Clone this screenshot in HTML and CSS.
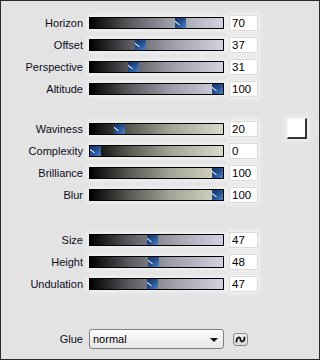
FILE: index.html
```html
<!DOCTYPE html>
<html>
<head>
<meta charset="utf-8">
<link rel="stylesheet" href="styles.css">
</head>
<body>
<div class="panel">
  <div class="group g1">
    <div class="row"><span class="lbl">Horizon</span><div class="slider cool"><span class="thumb" style="left:85px"></span></div><div class="num">70</div></div>
    <div class="row"><span class="lbl">Offset</span><div class="slider cool"><span class="thumb" style="left:45px"></span></div><div class="num">37</div></div>
    <div class="row"><span class="lbl">Perspective</span><div class="slider cool"><span class="thumb" style="left:38px"></span></div><div class="num">31</div></div>
    <div class="row"><span class="lbl">Altitude</span><div class="slider cool"><span class="thumb" style="left:122px"></span></div><div class="num">100</div></div>
  </div>
  <div class="group g2">
    <div class="row"><span class="lbl">Waviness</span><div class="slider warm"><span class="thumb" style="left:24px"></span></div><div class="num">20</div><div class="swatch"></div></div>
    <div class="row"><span class="lbl">Complexity</span><div class="slider warm"><span class="thumb" style="left:0px"></span></div><div class="num">0</div></div>
    <div class="row"><span class="lbl">Brilliance</span><div class="slider warm"><span class="thumb" style="left:122px"></span></div><div class="num">100</div></div>
    <div class="row"><span class="lbl">Blur</span><div class="slider warm"><span class="thumb" style="left:122px"></span></div><div class="num">100</div></div>
  </div>
  <div class="group g3">
    <div class="row"><span class="lbl">Size</span><div class="slider cool"><span class="thumb" style="left:57px"></span></div><div class="num">47</div></div>
    <div class="row"><span class="lbl">Height</span><div class="slider cool"><span class="thumb" style="left:58px"></span></div><div class="num">48</div></div>
    <div class="row"><span class="lbl">Undulation</span><div class="slider cool"><span class="thumb" style="left:57px"></span></div><div class="num">47</div></div>
  </div>
  <div class="row glue">
    <span class="lbl">Glue</span>
    <div class="select"><span>normal</span><span class="arrow"></span></div>
    <div class="sbtn"><svg width="11" height="9" viewBox="0 0 11 9"><path d="M1.5 6.5 C1.5 1.5 5.5 1.5 5.5 4.5 S9.5 7.5 9.5 2.5" fill="none" stroke="#111" stroke-width="1.8" stroke-linecap="round"/></svg></div>
  </div>
</div>
</body>
</html>
```
FILE: styles.css
```css
html, body {
  margin: 0;
  padding: 0;
  background: #e3e3e3;
}
.panel {
  width: 320px;
  height: 360px;
  box-sizing: border-box;
  border: 1px solid #2a2a2a;
  background: #e3e3e3;
  font-family: "Liberation Sans", Arial, sans-serif;
  font-size: 11px;
  color: #0d0d1a;
}
.group { display: flex; flex-direction: column; }
.g1 { margin-top: 11px; }
.g2 { margin-top: 18px; }
.g3 { margin-top: 23px; }
.row {
  display: grid;
  grid-template-columns: 83px 135px 29px 1fr;
  column-gap: 5px;
  align-items: center;
  height: 22px;
}
.lbl {
  text-align: right;
  padding-right: 1px;
  white-space: nowrap;
}
.slider {
  position: relative;
  height: 12px;
  box-sizing: border-box;
  border: 1px solid #000;
  box-shadow: 0 0 4px 2px #f2f2f2;
}
.cool { background: linear-gradient(to right, #000 0%, #5a5a60 30%, #9c9ca6 60%, #d2d3e0 100%); }
.warm { background: linear-gradient(to right, #000 0%, #5a5a54 30%, #a2a296 60%, #d9dac8 100%); }
.thumb {
  position: absolute;
  top: 0;
  width: 11px;
  height: 10px;
  background:
    linear-gradient(45deg, transparent 46%, rgba(255,255,255,0) 46%),
    linear-gradient(135deg, #1a3566 0%, #24508e 50%, #4a88d2 100%);
  overflow: hidden;
}
.thumb::after {
  content: "";
  position: absolute;
  left: -1px;
  top: 2px;
  width: 7px;
  height: 1px;
  background: #f4f6ff;
  transform: rotate(38deg);
  transform-origin: left center;
}
.num {
  height: 16px;
  box-sizing: border-box;
  background: #fff;
  border: 1px solid #dadada;
  box-shadow: 0 0 4px 2px #f2f2f2;
  font-size: 11.5px;
  line-height: 14px;
  padding-left: 2px;
  color: #000;
}
.swatch {
  justify-self: start;
  margin-left: 24px;
  margin-top: -1px;
  width: 20px;
  height: 21px;
  box-sizing: border-box;
  background: #fff;
  border-top: 1px solid #f4f4f4;
  border-left: 1px solid #f4f4f4;
  border-right: 2px solid #333;
  border-bottom: 2px solid #333;
  box-shadow: 0 0 4px 2px #f0f0f0;
}
.glue {
  margin-top: 33px;
}
.select {
  height: 20px;
  box-sizing: border-box;
  border: 1px solid #7e7e7e;
  border-radius: 3px;
  background: linear-gradient(to bottom, #fdfdfd, #e6e6e6);
  display: flex;
  align-items: center;
  justify-content: space-between;
  padding: 0 5px 0 3px;
  color: #000;
}
.arrow {
  width: 0;
  height: 0;
  border-left: 4px solid transparent;
  border-right: 4px solid transparent;
  border-top: 4px solid #111;
  margin-top: 1px;
}
.sbtn {
  margin-left: 4px;
  width: 15px;
  height: 13px;
  box-sizing: border-box;
  border: 1px solid #8a8a8a;
  border-radius: 3px;
  background: linear-gradient(to bottom, #f0f0f0, #d8d8d8);
  display: flex;
  align-items: center;
  justify-content: center;
}
```
